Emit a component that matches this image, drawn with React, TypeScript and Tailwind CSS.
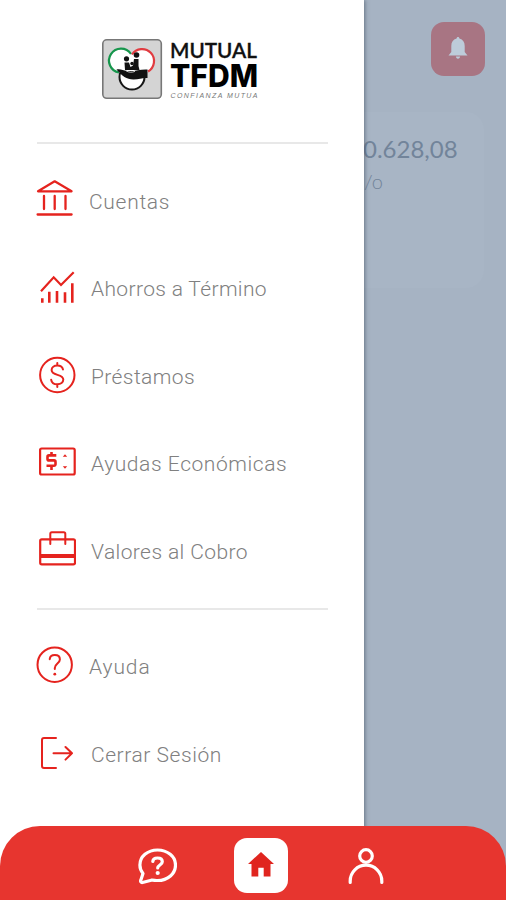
import type { ReactNode } from "react";

const Icon = ({ children }: { children: ReactNode }) => (
  <svg
    viewBox="0 0 40 44"
    className="h-11 w-10 shrink-0 text-[#e5231e]"
    fill="none"
    stroke="currentColor"
    strokeWidth="2"
    strokeLinecap="round"
    strokeLinejoin="round"
  >
    {children}
  </svg>
);

const BankIcon = () => (
  <Icon>
    <path d="M2 12.3 18.7 2.3 35.6 12.3Z" strokeWidth="2.2" />
    <path d="M1.6 35.500h34M8 17v13M18.700 17v13M29.500 17v13" strokeWidth="2.3" />
  </Icon>
);

const ChartIcon = () => (
  <Icon>
    <path d="m5 25.300 12.700-14L25 19 37.700 6.300" strokeWidth="2.200" strokeLinecap="butt" strokeLinejoin="miter" />
    <path
      d="M6.300 32.300v4.400M13.300 25.700v11M21 25v11.700M29 26.300v10.400M36.300 17.300v19.400"
      strokeWidth="2.600"
      strokeLinecap="butt"
    />
  </Icon>
);

const DollarIcon = () => (
  <Icon>
    <circle cx="21.300" cy="21" r="17.200" />
    <path d="M27 15.500c-.5-2.500-2.800-4-5.700-4-3.200 0-5.700 1.700-5.700 4.500 0 6.300 11.700 3.400 11.700 9.600 0 3-2.600 4.700-5.900 4.700-3.400 0-5.800-1.700-6.200-4.500M21.300 9v2.500M21.300 30.300V33" />
  </Icon>
);

const TicketIcon = () => (
  <Icon>
    <rect x="4.100" y="7.500" width="34.600" height="26" rx="1.500" strokeWidth="2.200" />
    <path
      d="M20.300 14.400H13a1.500 1.500 0 0 0-1.500 1.500v2a1.500 1.500 0 0 0 1.500 1.500h5a1.500 1.500 0 0 1 1.500 1.500v2.300a1.500 1.500 0 0 1-1.500 1.500h-7.500M15.500 11v3M15.500 25v4"
      strokeWidth="2.600"
      strokeLinecap="butt"
    />
    <path d="m26.800 15.800 2.200-2.500 2.200 2.500zM26.800 25.200l2.200 2.500 2.200-2.500z" fill="currentColor" stroke="none" />
  </Icon>
);

const BriefcaseIcon = () => (
  <Icon>
    <rect x="4.200" y="10.300" width="34.800" height="25" rx="1.500" strokeWidth="2.200" />
    <path d="M14.300 15V4.700a1.500 1.500 0 0 1 1.500-1.500h12a1.500 1.500 0 0 1 1.500 1.500V15" />
    <path d="M4.200 27h34.800" strokeWidth="3.800" strokeLinecap="butt" />
  </Icon>
);

const HelpIcon = () => (
  <Icon>
    <circle cx="18.700" cy="20.700" r="17.200" />
    <path d="M13.700 15.200c.3-2.700 2.300-4.200 5.100-4.200 3 0 5.100 1.700 5.100 4.400 0 4-5.100 4.200-5.100 8.500v1" />
    <circle cx="18.800" cy="30.200" r="1.400" fill="currentColor" stroke="none" />
  </Icon>
);

const LogoutIcon = () => (
  <Icon>
    <path d="M20 6H8a2 2 0 0 0-2 2v26a2 2 0 0 0 2 2h12M17.500 21.300h18.500M29.500 15l6.500 6.300-6.500 6.300" />
  </Icon>
);

const Logo = () => (
  <svg viewBox="0 -8 160 72" className="h-[72px] w-40" fontFamily="'Liberation Sans', sans-serif">
    <rect x="1.800" y="2.800" width="58.500" height="58.500" rx="4" fill="#d4d4d4" stroke="#777" strokeWidth="1.600" />
    <circle cx="31" cy="40" r="12.500" fill="#fff" stroke="#171717" strokeWidth="2" />
    <circle cx="20.500" cy="24" r="12" fill="#fff" />
    <circle cx="41.500" cy="24" r="12" fill="#fff" />
    <path d="M18 35.500A12 12 0 1 1 30 17" fill="none" stroke="#16964c" strokeWidth="2.200" />
    <path d="M31 17.500A12 12 0 1 1 47 34.500" fill="none" stroke="#e13b40" strokeWidth="2.200" />
    {/* people resting on the open hand */}
    <g fill="#111">
      <circle cx="25.500" cy="21.800" r="2.600" />
      <circle cx="35.500" cy="18" r="2.800" />
      <circle cx="31" cy="26.500" r="1.700" />
      <path d="M23.500 25.500h4.500l1.500 4.500 2.500-1.500 1-6.500h4.500v7l1 4H24z" />
      <path d="M15.500 32.500c4-1 6.500 1 10.500 1.500 8 .7 13-2 20.500-1.500v8.500c-5-.5-8 1.500-14 1.500-7 0-11.500-3.500-17-10z" />
    </g>
    <path d="M25 33.800c2.500 1.700 6 1.800 9 .6" fill="none" stroke="#d4d4d4" strokeWidth=".9" />
    <text x="69" y="20.800" fontSize="21.500" fontFamily="Lato, sans-serif" fontWeight="600" textLength="87" lengthAdjust="spacingAndGlyphs" fill="#111" stroke="#111" strokeWidth=".3">
      MUTUAL
    </text>
    <text x="69" y="49.500" fontSize="31" fontFamily="Inter, sans-serif" fontWeight="800" textLength="88" lengthAdjust="spacingAndGlyphs" fill="#000">
      TFDM
    </text>
    <text x="69.500" y="60.800" fontSize="7" fontStyle="italic" textLength="87" fill="#777">
      CONFIANZA MUTUA
    </text>
  </svg>
);

type Item = { label: string; icon: ReactNode; className: string };

const accounts: Item[] = [
  { label: "Cuentas", icon: <BankIcon />, className: "pl-[13px] tracking-[0.7px]" },
  { label: "Ahorros a Término", icon: <ChartIcon />, className: "pl-[15px] tracking-[0.35px]" },
  { label: "Préstamos", icon: <DollarIcon />, className: "pl-[15px] tracking-[0.4px]" },
  { label: "Ayudas Económicas", icon: <TicketIcon />, className: "pl-[15px] tracking-[0.57px]" },
  { label: "Valores al Cobro", icon: <BriefcaseIcon />, className: "pl-[15px] tracking-[0.4px]" },
];

const session: Item[] = [
  { label: "Ayuda", icon: <HelpIcon />, className: "pl-[13px] tracking-[0.9px]" },
  { label: "Cerrar Sesión", icon: <LogoutIcon />, className: "pl-[15px] tracking-[0.55px]" },
];

const Menu = ({ items }: { items: Item[] }) => (
  <ul className="py-[13px]">
    {items.map((item) => (
      <li key={item.label} className="flex h-[87.5px] items-center">
        {item.icon}
        <span
          className={`pt-[3px] font-[Roboto,sans-serif] text-[21px] font-light whitespace-nowrap text-[#808080] ${item.className}`}
        >
          {item.label}
        </span>
      </li>
    ))}
  </ul>
);

const Drawer = () => (
  <aside className="absolute inset-y-0 left-0 w-[364px] bg-white shadow-[1px_0_4px_rgba(60,75,90,0.6)]">
    <div className="flex h-[142px] pt-[29px] pl-[101px]">
      <Logo />
    </div>
    <div className="pl-9">
      <hr className="ml-px w-[291px] border-t-2 border-[#e8e8e8]" />
      <Menu items={accounts} />
      <hr className="ml-px w-[291px] border-t-2 border-[#e8e8e8]" />
      <Menu items={session} />
    </div>
  </aside>
);

const BottomBar = () => (
  <nav className="absolute inset-x-0 bottom-0 flex h-[74px] items-start rounded-t-[40px] bg-[#e7352f] pl-[137px] text-white">
    <svg viewBox="0 0 40 40" className="mt-5 size-10" fill="none" stroke="currentColor" strokeWidth="3.200" strokeLinecap="round" strokeLinejoin="round">
      <path d="M6 27.500C3.900 25 2.900 22.500 2.900 19 2.900 10.500 10.500 4 20.500 4s18 6.500 18 15-7.500 15.500-18 15.500c-2.500 0-4-.6-6.200-.3L5.500 36.500c-1.500.2-2.300-1-1.700-2.300z" />
      <path d="M15.800 15.500c.2-2.300 2-3.500 4.700-3.500 2.900 0 4.800 1.500 4.800 3.800 0 3.200-4.600 3.200-4.600 6.200" />
      <circle cx="20.700" cy="27" r="2.100" fill="currentColor" stroke="none" />
    </svg>
    <div className="mt-[11.500px] ml-[57px] flex h-[55px] w-[54px] items-center justify-center rounded-[13px] bg-white">
      <svg viewBox="0 0 26 26" className="mb-0.5 size-[26px] text-[#e0251f]" fill="currentColor">
        <path d="M13 1 26 13h-3.500v12.500h-6.800v-8.700h-5.400v8.700H3.500V13H0z" />
      </svg>
    </div>
    <svg viewBox="0 0 40 40" className="mt-5 ml-[58px] size-10" fill="none" stroke="currentColor" strokeWidth="3.200" strokeLinecap="round">
      <circle cx="20" cy="10" r="6.300" />
      <path d="M4.200 36.500v-1.500a15.800 15.800 0 0 1 31.600 0v1.500" />
    </svg>
  </nav>
);

export default function App() {
  return (
    <div className="relative h-[900px] w-[506px] overflow-hidden bg-[#a6b3c3]">
      <main className="flex flex-col items-end">
        <div className="mt-[22px] mr-[21px] flex size-[54px] items-center justify-center rounded-[13px] bg-[#a87583]">
          <svg viewBox="0 0 20 22" className="mb-0.5 h-[22px] w-5" fill="#bdccda">
            <path d="M10 0c.8 0 1.400.7 1.400 1.600C15 2.600 16.700 5.300 16.700 9v6l2.800 3.500H.5L3.300 15V9c0-3.700 1.700-6.400 5.300-7.400C8.600.7 9.200 0 10 0zM7.900 19.500h4.200c0 1.200-.9 2.200-2.100 2.200s-2.100-1-2.100-2.200z" />
          </svg>
        </div>
        <section className="mt-9 mr-[22px] h-[176px] w-[122px] rounded-r-[18px] bg-[#a8b5c5] pt-[21px] text-[#72849a]">
          <p className="pl-px font-[Lato,sans-serif] text-[24px] leading-8">0.628,08</p>
          <p className="mt-0.5 pl-0.5 font-[Lato,sans-serif] text-[20px] leading-7 font-light">/o</p>
        </section>
      </main>
      <Drawer />
      <BottomBar />
    </div>
  );
}
